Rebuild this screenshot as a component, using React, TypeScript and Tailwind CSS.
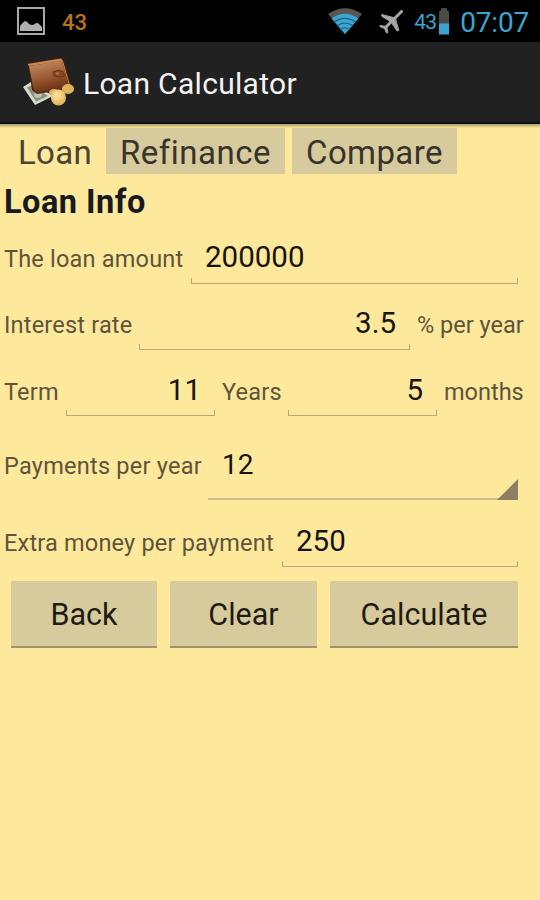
import clsx from 'clsx'

function PictureIcon() {
  return (
    <svg width="28" height="28" viewBox="0 0 28 28">
      <rect x="1" y="1" width="26" height="26" fill="#000" stroke="#a9a9a9" strokeWidth="2" />
      <path d="M3 24V19Q5 16 8 14Q10 14 12 17Q15 18.500 17 17.500Q20 15 22 17L25 20V24Z" fill="#b0b0b0" />
    </svg>
  )
}

function WifiIcon() {
  return (
    <svg width="34" height="26" viewBox="0 0 34 26">
      <path d="M0 6Q17 -5.500 34 6L17 26Z" fill="#5a5552" />
      <path d="M3.500 10.500Q17 1 30.500 10.500L17 26Z" fill="#3aa5d0" />
      <path d="M6 14Q17 6.500 28 14M9 17.800Q17 12.300 25 17.800M12 21.500Q17 18 22 21.500" fill="none" stroke="#1a5f7e" strokeWidth="1.100" />
    </svg>
  )
}

function PlaneIcon() {
  return (
    <svg width="24" height="24" viewBox="0 0 24 24" fill="none" stroke="#a5a5a5" strokeLinecap="round" strokeLinejoin="round">
      <path d="M22.500 1.500L6.500 17.500" strokeWidth="3" />
      <path d="M16 8L3 4.500L2.500 6L12 12L18 21L19.500 20.500Z" fill="#a5a5a5" strokeWidth="1" />
      <path d="M7.500 16.500L1 15.500L0.800 16.500L5.500 18.500L7.500 23L8.500 22.800Z" fill="#a5a5a5" strokeWidth="1" />
    </svg>
  )
}

function BatteryIcon() {
  return (
    <svg width="10" height="27" viewBox="0 0 10 27">
      <path d="M0 4Q0 2.500 2 2.500V1Q2 0 3 0H7Q8 0 8 1V2.500Q10 2.500 10 4V16H0Z" fill="#4a4a4a" />
      <rect y="15.500" width="10" height="11" fill="#3aa5d0" />
    </svg>
  )
}

function WalletIcon() {
  return (
    <svg width="52" height="48" viewBox="0 0 52 48">
      <defs>
        <linearGradient id="leather" x1="0" y1="0" x2="0.3" y2="1">
          <stop offset="0" stopColor="#b8763f" />
          <stop offset="0.2" stopColor="#b9805a" />
          <stop offset="0.6" stopColor="#9a5830" />
          <stop offset="1" stopColor="#6b3216" />
        </linearGradient>
        <radialGradient id="coin" cx="0.4" cy="0.35" r="0.7">
          <stop offset="0" stopColor="#ffe6a0" />
          <stop offset="1" stopColor="#e0ad55" />
        </radialGradient>
      </defs>
      <path d="M0 29L8 24L30 38L12 47Z" fill="#d8dccb" />
      <path d="M4 29.500L9 27L25 38L13 43.500Z" fill="#89917c" />
      <ellipse cx="15" cy="37" rx="4" ry="3" fill="#bcc3ac" />
      <path d="M5 5L38 0L42 5L47 27L44 31L14 36L9 32Z" fill="#4d210d" />
      <path d="M4.500 6L38 0.500L40 3L6 8Z" fill="#c98a4b" />
      <path d="M6 8L39 3L45.500 27L42 30L14 35L10.500 31Z" fill="url(#leather)" />
      <path d="M39.500 3L46.500 27" stroke="#d0843f" strokeWidth="1" />
      <path d="M30 14Q35 11 40 13.500L41.500 18Q36 20 31 18Z" fill="#8a4a26" stroke="#5f2c12" strokeWidth="0.800" />
      <circle cx="34.500" cy="15.500" r="1.300" fill="#b57c4e" />
      <ellipse cx="45" cy="31" rx="6" ry="5" fill="#dfb15a" />
      <ellipse cx="31" cy="34.500" rx="5" ry="3.500" fill="#e0b15c" />
      <ellipse cx="35.500" cy="39.500" rx="7.500" ry="8" fill="url(#coin)" />
      <path d="M31 37Q35 33 39 36M32 42Q36 38 40 41" stroke="#f7d98c" fill="none" />
    </svg>
  )
}

function Label({ children, className }: { children: string; className?: string }) {
  return (
    <span className={clsx('shrink-0 whitespace-nowrap text-[23.5px] text-[#5d543b]', className)}>
      {children}
    </span>
  )
}

function Field({ value, className }: { value: string; className?: string }) {
  return (
    <div className={clsx('flex h-[45px] shrink-0 flex-col leading-9', className)}>
      <div className="h-[39px] px-3.5 text-[29.5px] text-[#17140c]">{value}</div>
      <div className="h-[6px] border-x border-b border-[#b8aa78]" />
    </div>
  )
}

const tabs = [
  { name: 'Loan', className: 'w-[99px] pl-[18px] tracking-[0.3px] text-[#4b4432]' },
  { name: 'Refinance', className: 'w-[179px] bg-[#d7cb9d] pl-[14px] tracking-[0.5px] text-[#38342b]' },
  { name: 'Compare', className: 'w-[165px] bg-[#d7cb9d] pl-[14px] tracking-[0.4px] text-[#38342b]' },
]

const buttons = [
  { name: 'Back', className: 'w-[146px]' },
  { name: 'Clear', className: 'w-[147px]' },
  { name: 'Calculate', className: 'w-[188px]' },
]

export default function App() {
  return (
    <div className="h-[900px] w-[540px] overflow-hidden bg-[#fee89b] font-[Roboto,sans-serif]">
      {/* Status bar */}
      <div className="flex h-[42px] items-center bg-black pl-[17px] pr-[11px] text-[#3aa5d0]">
        <PictureIcon />
        <span className="ml-[17px] pt-[3px] text-[22px] font-medium leading-none text-[#b97517]">43</span>
        <div className="ml-auto flex items-center">
          <WifiIcon />
          <span className="ml-[17px] mt-0.5"><PlaneIcon /></span>
          <span className="ml-[11px] pt-[3px] text-[21px] leading-none tracking-[-0.8px]">43</span>
          <span className="ml-[3px]"><BatteryIcon /></span>
          <span className="ml-[11px] pt-[3px] text-[28px] leading-none tracking-[-0.2px]">07:07</span>
        </div>
      </div>

      {/* Title bar */}
      <div className="flex h-[82px] items-center border-b-2 border-[#0c0e10] bg-[#212121] pl-[23px]">
        <WalletIcon />
        <h1 className="ml-2 whitespace-nowrap pt-[3px] text-[30px] tracking-[0.3px] text-[#f3f3f3]">Loan Calculator</h1>
      </div>
      <div className="h-1 bg-linear-to-b from-[#a99b6b] to-[#fee89b]" />

      {/* Tabs */}
      <div className="flex h-[46px] gap-[7px]">
        {tabs.map((tab) => (
          <div key={tab.name} className={clsx('whitespace-nowrap text-[33px] leading-[49px]', tab.className)}>
            {tab.name}
          </div>
        ))}
      </div>

      <h2 className="h-[65px] pl-1 text-[32.5px] font-bold leading-[57px] tracking-[0.5px] text-[#171a20]">Loan Info</h2>

      {/* Form */}
      <div className="pl-1">
        <div className="flex h-[66px] items-baseline">
          <Label className="w-[187px] tracking-[0.2px]">The loan amount</Label>
          <Field value="200000" className="w-[327px]" />
        </div>
        <div className="flex h-[66px] items-baseline">
          <Label className="w-[135px] tracking-[0.2px]">Interest rate</Label>
          <Field value="3.5" className="w-[271px] text-right" />
          <Label className="ml-[7px]">% per year</Label>
        </div>
        <div className="flex h-[66px] items-baseline">
          <Label className="w-[62px] tracking-[0.2px]">Term</Label>
          <Field value="11" className="w-[149px] text-right leading-[38px]" />
          <Label className="ml-[7px] w-[66px] tracking-[0.2px]">Years</Label>
          <Field value="5" className="w-[149px] text-right leading-[38px]" />
          <Label className="ml-[7px]">months</Label>
        </div>
        <div className="flex h-[85px] items-baseline pt-[10px]">
          <Label className="w-[204px] tracking-[0.25px]">Payments per year</Label>
          <div className="flex h-[53px] w-[310px] items-end justify-between border-b-2 border-[#cbbc86]">
            <span className="h-full pl-[14px] text-[28px] leading-9 text-[#17140c]">12</span>
            <svg width="21" height="21" viewBox="0 0 21 21" className="-mb-0.5">
              <path d="M0 21L21 0V21Z" fill="#8c8060" />
            </svg>
          </div>
        </div>
        <div className="flex h-[59px] items-baseline">
          <Label className="w-[278px] tracking-[0.2px]">Extra money per payment</Label>
          <Field value="250" className="w-[236px] leading-[38px]" />
        </div>
      </div>

      {/* Actions */}
      <div className="flex gap-[13px] pl-[11px]">
        {buttons.map((button) => (
          <button
            key={button.name}
            className={clsx('h-[67px] border-b-2 border-[#a0956f] bg-[#d7cb9d] pt-0.5 text-[30.5px] text-[#1f1c14]', button.className)}
          >
            {button.name}
          </button>
        ))}
      </div>
    </div>
  )
}
